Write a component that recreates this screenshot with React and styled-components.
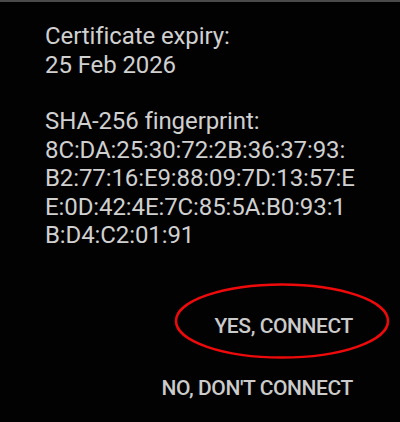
import React from 'react';
import styled, { createGlobalStyle } from 'styled-components';

const GlobalStyle = createGlobalStyle`
    html, body {
        margin: 0;
        padding: 0;
        background: #020202;
    }
    body {
        font-family: Roboto, "Liberation Sans", sans-serif;
    }
`;

const Screen = styled.div`
    width: 400px;
    height: 422px;
    box-sizing: border-box;
    border-top: 2px solid #4a4a4a;
    background: #020202;
    color: #d0d0d0;
    display: flex;
    flex-direction: column;
    overflow: hidden;
`;

const Details = styled.div`
    padding: 20px 0 0 45px;
    display: flex;
    flex-direction: column;
    gap: 28px;
`;

const Block = styled.div`
    font-size: 24px;
    line-height: 28.5px;
    letter-spacing: -0.1px;
    white-space: nowrap;
`;

const Actions = styled.div`
    margin-top: auto;
    padding: 0 47px 22px 0;
    display: flex;
    flex-direction: column;
    align-items: flex-end;
    gap: 38px;
`;

const ActionButton = styled.button`
    position: relative;
    background: none;
    border: none;
    padding: 0;
    color: #cbcbcb;
    font-family: Roboto, "Liberation Sans", sans-serif;
    font-weight: 500;
    font-size: 21px;
    letter-spacing: -0.4px;
    line-height: 24px;
    white-space: nowrap;
    cursor: pointer;
`;

const Highlight = styled.svg`
    position: absolute;
    left: calc(50% - 110px);
    top: calc(50% - 43px);
    width: 216px;
    height: 76px;
    overflow: visible;
    pointer-events: none;
`;

const fingerprint = [
    '8C:DA:25:30:72:2B:36:37:93:',
    'B2:77:16:E9:88:09:7D:13:57:E',
    'E:0D:42:4E:7C:85:5A:B0:93:1',
    'B:D4:C2:01:91',
];

export default function App() {
    return (
        <Screen>
            <GlobalStyle />
            <Details>
                <Block>
                    <div>Certificate expiry:</div>
                    <div>25 Feb 2026</div>
                </Block>
                <Block>
                    <div>SHA-256 fingerprint:</div>
                    {fingerprint.map(line => <div key={line}>{line}</div>)}
                </Block>
            </Details>
            <Actions>
                <ActionButton>
                    <Highlight viewBox="0 0 216 76">
                        <ellipse cx="108" cy="38" rx="106" ry="36.5" fill="none" stroke="#ee0a0a" strokeWidth="2.5" />
                    </Highlight>
                    YES, CONNECT
                </ActionButton>
                <ActionButton>NO, DON'T CONNECT</ActionButton>
            </Actions>
        </Screen>
    );
}
